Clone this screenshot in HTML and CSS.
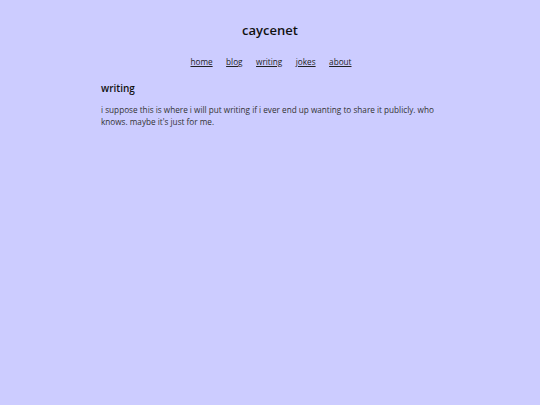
FILE: index.html
```html
<!DOCTYPE html>
<html>
<head>
<meta charset="utf-8">
<link rel="stylesheet" href="styles.css">
</head>
<body>
<header class="site-header">
  <h1 class="site-title">caycenet</h1>
  <nav class="site-nav">
    <a href="#">home</a>
    <a href="#">blog</a>
    <a href="#">writing</a>
    <a href="#">jokes</a>
    <a href="#">about</a>
  </nav>
</header>
<main class="content">
  <h2 class="page-title">writing</h2>
  <p class="page-text">i suppose this is where i will put writing if i ever end up wanting to share it publicly. who knows. maybe it's just for me.</p>
</main>
</body>
</html>
```
FILE: styles.css
```css
html, body {
  margin: 0;
  padding: 0;
  background: #ccccff;
}
body {
  font-family: "Open Sans", sans-serif;
  color: #222;
  min-height: 405px;
}
.site-header {
  display: flex;
  flex-direction: column;
  align-items: center;
  padding-top: 21px;
}
.site-title {
  margin: 0;
  font-size: 13px;
  font-weight: 600;
  line-height: 18px;
  color: #111;
}
.site-nav {
  display: flex;
  gap: 13.5px;
  margin-top: 17px;
  margin-left: 2px;
  font-size: 8.2px;
  line-height: 12px;
}
.site-nav a {
  color: #222;
  text-decoration: underline;
}
.content {
  width: 338px;
  margin: 13px auto 0;
}
.page-title {
  margin: 0;
  font-size: 10px;
  font-weight: 600;
  line-height: 14px;
  color: #111;
}
.page-text {
  margin: 9px 0 0;
  font-size: 8.2px;
  line-height: 12px;
  color: #333;
}
```
